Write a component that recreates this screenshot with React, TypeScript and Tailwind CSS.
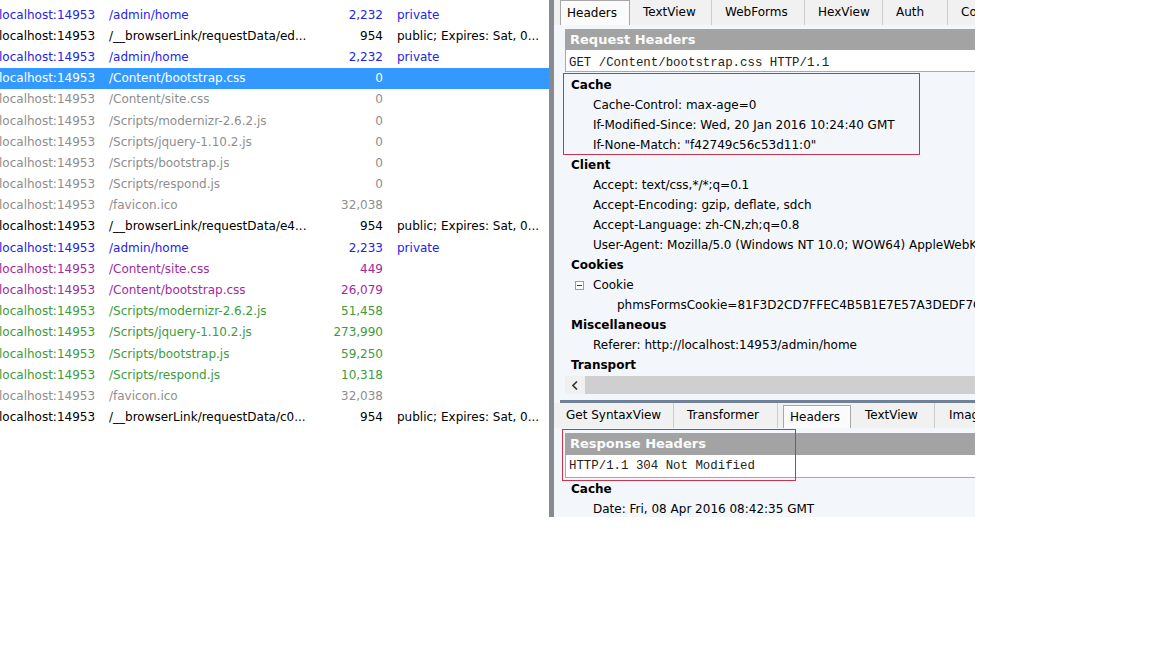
const sessions = [
  { url: "/admin/home", size: "2,232", cache: "private", tone: "blue" },
  { url: "/__browserLink/requestData/ed...", size: "954", cache: "public; Expires: Sat, 0...", tone: "black" },
  { url: "/admin/home", size: "2,232", cache: "private", tone: "blue" },
  { url: "/Content/bootstrap.css", size: "0", cache: "", tone: "selected" },
  { url: "/Content/site.css", size: "0", cache: "", tone: "gray" },
  { url: "/Scripts/modernizr-2.6.2.js", size: "0", cache: "", tone: "gray" },
  { url: "/Scripts/jquery-1.10.2.js", size: "0", cache: "", tone: "gray" },
  { url: "/Scripts/bootstrap.js", size: "0", cache: "", tone: "gray" },
  { url: "/Scripts/respond.js", size: "0", cache: "", tone: "gray" },
  { url: "/favicon.ico", size: "32,038", cache: "", tone: "gray" },
  { url: "/__browserLink/requestData/e4...", size: "954", cache: "public; Expires: Sat, 0...", tone: "black" },
  { url: "/admin/home", size: "2,233", cache: "private", tone: "blue" },
  { url: "/Content/site.css", size: "449", cache: "", tone: "purple" },
  { url: "/Content/bootstrap.css", size: "26,079", cache: "", tone: "purple" },
  { url: "/Scripts/modernizr-2.6.2.js", size: "51,458", cache: "", tone: "green" },
  { url: "/Scripts/jquery-1.10.2.js", size: "273,990", cache: "", tone: "green" },
  { url: "/Scripts/bootstrap.js", size: "59,250", cache: "", tone: "green" },
  { url: "/Scripts/respond.js", size: "10,318", cache: "", tone: "green" },
  { url: "/favicon.ico", size: "32,038", cache: "", tone: "gray" },
  { url: "/__browserLink/requestData/c0...", size: "954", cache: "public; Expires: Sat, 0...", tone: "black" },
];

const toneClass: Record<string, string> = {
  blue: "text-[#2424e4]",
  black: "text-black",
  gray: "text-[#8e8e8e]",
  purple: "text-[#a02aa0]",
  green: "text-[#3c9c3c]",
  selected: "bg-[#3399ff] text-white",
};

const requestTree = [
  { kind: "cat", text: "Cache" },
  { kind: "item", text: "Cache-Control: max-age=0" },
  { kind: "item", text: "If-Modified-Since: Wed, 20 Jan 2016 10:24:40 GMT" },
  { kind: "item", text: 'If-None-Match: "f42749c56c53d11:0"' },
  { kind: "cat", text: "Client" },
  { kind: "item", text: "Accept: text/css,*/*;q=0.1" },
  { kind: "item", text: "Accept-Encoding: gzip, deflate, sdch" },
  { kind: "item", text: "Accept-Language: zh-CN,zh;q=0.8" },
  { kind: "item", text: "User-Agent: Mozilla/5.0 (Windows NT 10.0; WOW64) AppleWebKit/537.36" },
  { kind: "cat", text: "Cookies" },
  { kind: "node", text: "Cookie" },
  { kind: "sub", text: "phmsFormsCookie=81F3D2CD7FFEC4B5B1E7E57A3DEDF7C0" },
  { kind: "cat", text: "Miscellaneous" },
  { kind: "item", text: "Referer: http://localhost:14953/admin/home" },
  { kind: "cat", text: "Transport" },
];

function TreeLine({ kind, text }: { kind: string; text: string }) {
  if (kind === "cat") {
    return <div className="h-[20px] leading-[20px] pl-[6px] font-bold whitespace-nowrap">{text}</div>;
  }
  if (kind === "node") {
    return (
      <div className="h-[20px] flex items-center pl-[10px] whitespace-nowrap">
        <span className="w-[9px] h-[9px] shrink-0 border border-[#9c9c9c] bg-white flex items-center justify-center">
          <span className="w-[5px] h-px bg-[#444]" />
        </span>
        <span className="ml-[9px]">{text}</span>
      </div>
    );
  }
  if (kind === "sub") {
    return <div className="h-[20px] leading-[20px] pl-[52px] whitespace-nowrap">{text}</div>;
  }
  return <div className="h-[20px] leading-[20px] pl-[28px] whitespace-nowrap">{text}</div>;
}

const requestTabs = [
  { label: "TextView", w: "w-[82px]" },
  { label: "WebForms", w: "w-[93px]" },
  { label: "HexView", w: "w-[78px]" },
  { label: "Auth", w: "w-[65px]" },
  { label: "Cookies", w: "w-[80px]" },
];

export default function App() {
  return (
    <div className="w-[1152px] h-[648px] bg-white font-['DejaVu_Sans',sans-serif] text-[12px] text-black">
      <div className="flex w-[975px] h-[517px] overflow-hidden">
        {/* session list */}
        <div className="w-[549px] shrink-0 pt-[4px] overflow-hidden bg-white">
          {sessions.map((s, i) => (
            <div key={i} className={`flex items-center h-[21.2px] whitespace-nowrap ${toneClass[s.tone]}`}>
              <span className="w-[110px] -ml-px shrink-0">localhost:14953</span>
              <span className="w-[214px] shrink-0">{s.url}</span>
              <span className="w-[60px] shrink-0 text-right">{s.size}</span>
              <span className="pl-[14px]">{s.cache}</span>
            </div>
          ))}
        </div>

        <div className="w-[5px] shrink-0 bg-[#878b91]" />

        {/* inspectors */}
        <div className="relative w-[421px] shrink-0 flex flex-col bg-[#f3f6fa] overflow-hidden">
          <div className="h-[25px] flex bg-[#f1f1f1] pl-[6px] shrink-0">
            <div className="w-[70px] shrink-0 border border-b-0 border-[#a7a7a7] bg-[#fbfbfb] pl-[6px] leading-[24px]">Headers</div>
            {requestTabs.map((t) => (
              <div key={t.label} className={`${t.w} shrink-0 border-r border-[#cdcdcd] pl-[13px] leading-[24px] whitespace-nowrap`}>
                {t.label}
              </div>
            ))}
          </div>

          <div className="ml-[11px] mt-[4px] h-[21px] bg-[#a3a3a3] text-[#fbfbfb] font-bold text-[13px] leading-[21px] pl-[5px] whitespace-nowrap shrink-0">
            Request Headers
          </div>
          <div className="ml-[11px] h-[22px] flex items-center pt-[5px] bg-white border-l border-b border-[#a9a9a9] pl-[3px] font-['Liberation_Mono',monospace] text-[12.4px] text-[#222] whitespace-nowrap shrink-0">
            GET /Content/bootstrap.css HTTP/1.1
          </div>

          <div className="ml-[11px] pt-[3px] shrink-0">
            {requestTree.map((l, i) => (
              <TreeLine key={i} kind={l.kind} text={l.text} />
            ))}
          </div>

          {/* horizontal scrollbar */}
          <div className="mt-[1px] ml-[11px] h-[18px] flex shrink-0">
            <div className="w-[20px] shrink-0 flex items-center justify-center bg-[#f0f0f0]">
              <svg width="6" height="9" viewBox="0 0 6 9">
                <path d="M5 0.5 L1 4.5 L5 8.5" fill="none" stroke="#333" strokeWidth="1.6" />
              </svg>
            </div>
            <div className="flex-1 bg-[#cfcfcf]" />
          </div>

          <div className="mt-[6px] ml-[6px] h-[3px] bg-[#6f8196] shrink-0" />

          <div className="h-[25px] flex bg-[#f1f1f1] pl-[6px] shrink-0">
            <div className="w-[114px] shrink-0 border-r border-[#cdcdcd] pl-[6px] leading-[25px] whitespace-nowrap">Get SyntaxView</div>
            <div className="w-[104px] shrink-0 border-r border-[#cdcdcd] pl-[13px] leading-[25px] whitespace-nowrap">Transformer</div>
            <div className="ml-[5px] mt-[2px] w-[68px] shrink-0 border border-b-0 border-[#a7a7a7] bg-[#fbfbfb] pl-[6px] leading-[23px]">Headers</div>
            <div className="w-[84px] shrink-0 border-r border-[#cdcdcd] pl-[14px] leading-[25px] whitespace-nowrap">TextView</div>
            <div className="w-[80px] shrink-0 pl-[14px] leading-[25px] whitespace-nowrap">ImageView</div>
          </div>

          <div className="ml-[11px] mt-[5px] h-[22px] bg-[#a3a3a3] text-[#fbfbfb] font-bold text-[13px] leading-[22px] pl-[5px] whitespace-nowrap shrink-0">
            Response Headers
          </div>
          <div className="ml-[11px] h-[23px] bg-white border-l border-b border-[#a9a9a9] pl-[3px] leading-[22px] font-['Liberation_Mono',monospace] text-[12.4px] text-[#222] whitespace-nowrap shrink-0">
            HTTP/1.1 304 Not Modified
          </div>
          <div className="ml-[11px] pt-[1px] shrink-0">
            <TreeLine kind="cat" text="Cache" />
            <TreeLine kind="item" text="Date: Fri, 08 Apr 2016 08:42:35 GMT" />
          </div>

          {/* red annotation boxes */}
          <div className="absolute left-[9px] top-[73px] w-[357px] h-[82px] border border-[#c9344c]" />
          <div className="absolute left-[8px] top-[429px] w-[234px] h-[52px] border border-[#c9344c]" />
        </div>
      </div>
    </div>
  );
}
